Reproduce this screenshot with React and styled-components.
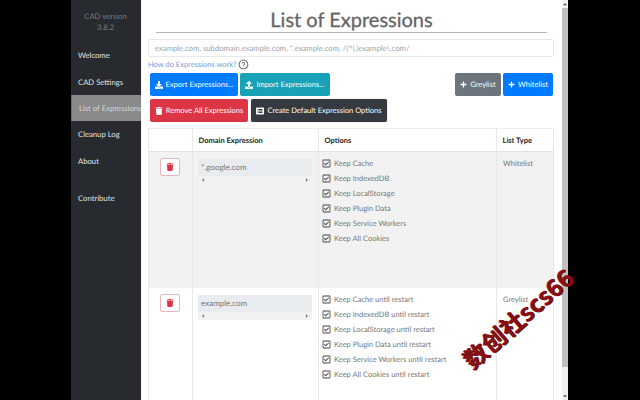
import React from 'react';
import styled, { createGlobalStyle } from 'styled-components';
import { FaDownload, FaUpload, FaTrash, FaPlus, FaRegCheckSquare, FaListAlt, FaCaretLeft, FaCaretRight, FaCaretUp, FaCaretDown } from 'react-icons/fa';
import { AiOutlineQuestionCircle } from 'react-icons/ai';

const GlobalStyle = createGlobalStyle`
  html, body { margin: 0; padding: 0; width: 640px; height: 400px; overflow: hidden; background: #000; }
  * { box-sizing: border-box; }
  body { font-family: Lato, "Open Sans", sans-serif; text-rendering: geometricPrecision; }
`;

const Stage = styled.div`
  position: relative;
  display: flex;
  width: 640px;
  height: 400px;
  overflow: hidden;
  background: #000;
`;

const Pillar = styled.div`
  flex: 0 0 ${(p) => p.$w}px;
`;

const Sidebar = styled.nav`
  flex: 0 0 70px;
  display: flex;
  flex-direction: column;
  background: #272b30;
  color: #e4e4e4;
  font-size: 7.7px;
  white-space: nowrap;
  overflow: hidden;
`;

const Version = styled.div`
  padding-top: 11px;
  margin-bottom: 6px;
  text-align: center;
  color: #787b7e;
  font-size: 7.7px;
  line-height: 11px;
  height: 36px;
  padding-right: 1px;
`;

const NavItem = styled.div`
  height: 26.4px;
  margin-top: ${(p) => p.$mt || 0}px;
  display: flex;
  align-items: center;
  padding-left: 7px;
  background: ${(p) => (p.$active ? '#8a8a8a' : 'transparent')};
  border-left: ${(p) => (p.$active ? '1px solid #2f7fd0' : 'none')};
  color: ${(p) => (p.$active ? '#d8d8d8' : '#e4e4e4')};
`;

const Main = styled.main`
  flex: 0 0 421px;
  padding: 0 8px 0 6px;
  background: #fff;
  border-left: 1px solid #f4f4f4;
  overflow: hidden;
`;

const Title = styled.h1`
  margin: 7px 7px 0 8px;
  height: 26px;
  border-bottom: 1px solid #b4b4b4;
  color: #666;
  font-size: 20px;
  font-weight: 400;
  -webkit-text-stroke: 0.3px #666;
  line-height: 26px;
  text-align: center;
`;

const ExpressionInput = styled.div`
  margin-top: 6px;
  height: 18px;
  padding-left: 6px;
  border: 1px solid #e6e8ea;
  border-radius: 2px;
  color: #9da3a8;
  font-size: 7.7px;
  line-height: 16px;
  white-space: nowrap;
`;

const HelpLink = styled.div`
  display: flex;
  align-items: center;
  gap: 2px;
  height: 12px;
  margin-top: 1px;
  color: #6f9fe0;
  font-size: 7.5px;
  svg { color: #555; font-size: 11px; }
`;

const ButtonRow = styled.div`
  display: flex;
  gap: ${(p) => p.$gap}px;
  margin: 3px 1px 0 2px;
`;

const Spacer = styled.div`
  flex: 1;
`;

const Button = styled.div`
  display: flex;
  align-items: center;
  justify-content: center;
  gap: 3px;
  width: ${(p) => p.$w}px;
  height: 23px;
  border-radius: 2px;
  background: ${(p) => p.$bg};
  color: #fff;
  font-size: 7.5px;
  white-space: nowrap;
  box-shadow: ${(p) => (p.$dark ? '0 0 1px #888' : 'none')};
  svg { flex: none; font-size: ${(p) => p.$icon || 8}px; }
`;

const Table = styled.div`
  display: grid;
  grid-template-columns: 44px 126px 178px 58px;
  margin-top: 6px;
  border-top: 1px solid #ececec;
  width: 406px;
`;

const HeadCell = styled.div`
  height: 23px;
  padding-left: 5.5px;
  border-left: 1px solid #e8e8e8;
  border-right: ${(p) => (p.$last ? '1px solid #e8e8e8' : 'none')};
  border-bottom: 1px solid #e2e2e2;
  color: #222;
  font-size: 7.5px;
  font-weight: 700;
  line-height: 23px;
`;

const Cell = styled.div`
  height: ${(p) => p.$h}px;
  padding: ${(p) => p.$pad || '0 0 0 6px'};
  border-left: 1px solid #e8e8e8;
  border-right: ${(p) => (p.$last ? '1px solid #e8e8e8' : 'none')};
  background: ${(p) => (p.$shade ? '#f2f2f2' : '#fff')};
  color: #777;
  font-size: 7.5px;
`;

const DeleteButton = styled.div`
  display: flex;
  align-items: center;
  justify-content: center;
  width: 20px;
  height: 18px;
  margin: 6px 0 0 11px;
  background: #fff;
  border: 1px solid #e4b7bc;
  border-radius: 2px;
  color: #dc3545;
  font-size: 8px;
`;

const DomainBox = styled.div`
  margin: 7px 6px 0 5px;
  width: 114px;
  background: #f1f2f3;
`;

const DomainText = styled.div`
  height: 17px;
  padding-left: 3px;
  background: #e9ecef;
  color: #777;
  font-size: 8px;
  line-height: 17px;
`;

const ScrollArrows = styled.div`
  display: flex;
  justify-content: space-between;
  align-items: center;
  height: 8px;
  padding: 0 2px;
  color: #888;
  font-size: 6px;
`;

const OptionList = styled.div`
  display: flex;
  flex-direction: column;
`;

const Option = styled.div`
  display: flex;
  align-items: center;
  gap: 3px;
  height: 15px;
  white-space: nowrap;
  svg { flex: none; color: #444; font-size: 9px; }
`;

const ListType = styled.div`
  line-height: 16px;
  padding-top: 4px;
`;

const Scrollbar = styled.div`
  flex: 0 0 6px;
  display: flex;
  flex-direction: column;
  background: #f1f1f1;
`;

const ScrollButton = styled.div`
  height: 8px;
  display: flex;
  align-items: center;
  justify-content: center;
  color: #555;
  font-size: 6px;
`;

const ScrollThumb = styled.div`
  height: 359px;
  background: #c1c1c1;
`;

const Watermark = styled.div`
  position: absolute;
  left: 449px;
  top: 303px;
  color: #8a0f14;
  font-family: "Noto Sans CJK SC", "DejaVu Sans", sans-serif;
  font-size: 24px;
  font-weight: 700;
  line-height: 30px;
  white-space: nowrap;
  transform: rotate(-41deg);
  transform-origin: center;
  text-shadow: 1px 1px 0 #5a0a0d;
`;

const optionsWhitelist = ['Keep Cache', 'Keep IndexedDB', 'Keep LocalStorage', 'Keep Plugin Data', 'Keep Service Workers', 'Keep All Cookies'];

const rows = [
  { domain: '*.google.com', type: 'Whitelist', shade: true, h: 136, options: optionsWhitelist },
  { domain: 'example.com', type: 'Greylist', shade: false, h: 112, options: optionsWhitelist.map((o) => `${o} until restart`) },
];

function App() {
  return (
    <Stage>
      <GlobalStyle />
      <Pillar $w={71} />
      <Sidebar>
        <Version>CAD version<br />3.8.2</Version>
        <NavItem>Welcome</NavItem>
        <NavItem>CAD Settings</NavItem>
        <NavItem $active>List of Expressions</NavItem>
        <NavItem>Cleanup Log</NavItem>
        <NavItem>About</NavItem>
        <NavItem $mt={11}>Contribute</NavItem>
      </Sidebar>
      <Main>
        <Title>List of Expressions</Title>
        <ExpressionInput>example.com, subdomain.example.com, *.example.com, /(^|.)example\.com/</ExpressionInput>
        <HelpLink>How do Expressions work? <AiOutlineQuestionCircle /></HelpLink>
        <ButtonRow $gap={2}>
          <Button $w={88} $bg="#007bff"><FaDownload />Export Expressions...</Button>
          <Button $w={90} $bg="#17a2b8"><FaUpload />Import Expressions...</Button>
          <Spacer />
          <Button $w={46} $bg="#6c757d" $icon={7}><FaPlus />Greylist</Button>
          <Button $w={50} $bg="#007bff" $icon={7}><FaPlus />Whitelist</Button>
        </ButtonRow>
        <ButtonRow $gap={3}>
          <Button $w={98} $bg="#dc3545"><FaTrash />Remove All Expressions</Button>
          <Button $w={136} $bg="#343a40" $dark><FaListAlt />Create Default Expression Options</Button>
        </ButtonRow>
        <Table>
          <HeadCell />
          <HeadCell>Domain Expression</HeadCell>
          <HeadCell>Options</HeadCell>
          <HeadCell $last>List Type</HeadCell>
          {rows.map((r) => (
            <React.Fragment key={r.domain}>
              <Cell $h={r.h} $shade={r.shade} $pad="0">
                <DeleteButton><FaTrash /></DeleteButton>
              </Cell>
              <Cell $h={r.h} $shade={r.shade} $pad="0">
                <DomainBox>
                  <DomainText>{r.domain}</DomainText>
                  <ScrollArrows><FaCaretLeft /><FaCaretRight /></ScrollArrows>
                </DomainBox>
              </Cell>
              <Cell $h={r.h} $shade={r.shade} $pad="4px 0 0 3px">
                <OptionList>
                  {r.options.map((o) => (
                    <Option key={o}><FaRegCheckSquare />{o}</Option>
                  ))}
                </OptionList>
              </Cell>
              <Cell $h={r.h} $shade={r.shade} $last>
                <ListType>{r.type}</ListType>
              </Cell>
            </React.Fragment>
          ))}
        </Table>
      </Main>
      <Scrollbar>
        <ScrollButton><FaCaretUp /></ScrollButton>
        <ScrollThumb />
        <Spacer />
        <ScrollButton><FaCaretDown /></ScrollButton>
      </Scrollbar>
      <Pillar $w={72} />
      <Watermark>数创社scs66</Watermark>
    </Stage>
  );
}

export default App;
